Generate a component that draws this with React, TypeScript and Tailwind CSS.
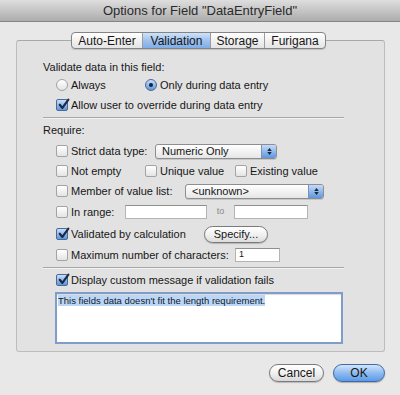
import type { ReactNode } from "react";

// Small aqua-style controls
function CheckBox({ checked }: { checked?: boolean }) {
  return (
    <span
      className={
        "relative inline-flex w-[12px] h-[12px] shrink-0 rounded-[2px] border " +
        (checked
          ? "border-[#4a6a96] bg-gradient-to-b from-[#c9defa] to-[#5d95dc]"
          : "border-[#a3a3a3] bg-gradient-to-b from-[#ffffff] to-[#e4e4e4]")
      }
    >
      {checked && (
        <svg viewBox="0 0 12 12" className="absolute left-[0px] top-[-2px] w-[13px] h-[13px]">
          <path d="M2.5 6.2 L5 9.2 L10.5 1.5" fill="none" stroke="#1b2a44" strokeWidth="2" strokeLinecap="round" strokeLinejoin="round" />
        </svg>
      )}
    </span>
  );
}

function Radio({ checked }: { checked?: boolean }) {
  return (
    <span
      className={
        "inline-flex items-center justify-center w-[12px] h-[12px] shrink-0 rounded-full border " +
        (checked
          ? "border-[#4a6a96] bg-gradient-to-b from-[#c9defa] to-[#5d95dc]"
          : "border-[#a3a3a3] bg-gradient-to-b from-[#ffffff] to-[#e4e4e4]")
      }
    >
      {checked && <span className="w-[4px] h-[4px] rounded-full bg-[#152238]" />}
    </span>
  );
}

function Check({ label, checked, w }: { label: string; checked?: boolean; w?: string }) {
  return (
    <span className={"flex items-center gap-[3px] shrink-0 " + (w ?? "")}>
      <CheckBox checked={checked} />
      <span>{label}</span>
    </span>
  );
}

function Popup({ value, w }: { value: string; w: string }) {
  return (
    <span className={"flex h-[15px] rounded-[3px] border border-[#8e8e8e] overflow-hidden bg-gradient-to-b from-[#ffffff] to-[#e6e6e6] shadow-[0_1px_0_rgba(0,0,0,0.12)] " + w}>
      <span className="flex-1 pl-[6px] leading-[13px]">{value}</span>
      <span className="w-[15px] border-l border-[#7d93b6] bg-gradient-to-b from-[#c5dbf7] to-[#5e95dc] flex flex-col items-center justify-center gap-[1px]">
        <svg viewBox="0 0 6 4" className="w-[5px] h-[3px]"><path d="M0 4 L3 0 L6 4 Z" fill="#1a2740" /></svg>
        <svg viewBox="0 0 6 4" className="w-[5px] h-[3px]"><path d="M0 0 L3 4 L6 0 Z" fill="#1a2740" /></svg>
      </span>
    </span>
  );
}

function Field({ w, h, children }: { w: string; h: string; children?: ReactNode }) {
  return (
    <span className={"flex items-center bg-white border border-[#b4b4b4] border-t-[#8f8f8f] pl-[3px] text-[9px] " + w + " " + h}>
      {children}
    </span>
  );
}

function Row({ children, mt, pl = "pl-[13px]" }: { children: ReactNode; mt: string; pl?: string }) {
  return <div className={"flex items-center h-[18px] " + mt + " " + pl}>{children}</div>;
}

function Sep({ mt }: { mt: string }) {
  return <div className={"w-[301px] h-[2px] border-t border-[#a7a7a7] border-b border-b-[#f2f2f2] " + mt} />;
}

const tabs = ["Auto-Enter", "Validation", "Storage", "Furigana"];
const tabW = ["w-[70px]", "w-[68px]", "w-[54px]", "w-[61px]"];

export default function App() {
  return (
    <div className="w-[400px] h-[395px] bg-[#e8e8e8] text-[11px] text-[#161616] font-['Liberation_Sans',Arial,sans-serif] flex flex-col overflow-hidden">
      {/* title bar */}
      <div className="h-[22px] shrink-0 flex items-center justify-center bg-gradient-to-b from-[#dedede] to-[#adadad] border-b border-[#858585] text-[13px] text-[#2a2a2a]">
        Options for Field "DataEntryField"
      </div>

      <div className="flex flex-col pl-[16px] pt-[10px]">
        {/* tabs */}
        <div className="relative z-10 flex w-[369px] justify-center pr-[4px]">
          <div className="flex h-[17px] rounded-[4px] border border-[#848484] overflow-hidden bg-gradient-to-b from-[#ffffff] to-[#e4e4e4] shadow-[0_1px_1px_rgba(0,0,0,0.15)] text-[12px]">
            {tabs.map((t, i) => (
              <span
                key={t}
                className={
                  "flex items-center justify-center " +
                  tabW[i] +
                  (i > 0 ? " border-l border-[#9c9c9c]" : "") +
                  (t === "Validation" ? " bg-gradient-to-b from-[#cfe2f9] via-[#9fc2ee] to-[#7eaee8]" : "")
                }
              >
                {t}
              </span>
            ))}
          </div>
        </div>

        {/* group box */}
        <div className="-mt-[9px] w-[369px] h-[312px] rounded-[3px] border border-[#bdbdbd] border-t-[#a9a9a9] bg-[#e2e2e2] pl-[26px] pt-[17px] flex flex-col">
          <Row mt="mt-0" pl="pl-0">Validate data in this field:</Row>
          <Row mt="mt-0">
            <span className="flex items-center gap-[3px] w-[89px]"><Radio /><span>Always</span></span>
            <span className="flex items-center gap-[3px]"><Radio checked /><span>Only during data entry</span></span>
          </Row>
          <Row mt="mt-[2px]">
            <Check checked label="Allow user to override during data entry" />
          </Row>
          <Sep mt="mt-[3px]" />
          <Row mt="mt-[2px]" pl="pl-0">Require:</Row>
          <Row mt="mt-[3px]">
            <Check label="Strict data type:" w="w-[99px]" />
            <Popup value="Numeric Only" w="w-[122px]" />
          </Row>
          <Row mt="mt-[2px]">
            <Check label="Not empty" w="w-[89px]" />
            <Check label="Unique value" w="w-[90px]" />
            <Check label="Existing value" />
          </Row>
          <Row mt="mt-[2px]">
            <Check label="Member of value list:" w="w-[129px]" />
            <Popup value="<unknown>" w="w-[139px]" />
          </Row>
          <Row mt="mt-[3px]">
            <Check label="In range:" w="w-[69px]" />
            <Field w="w-[82px]" h="h-[14px]" />
            <span className="w-[27px] text-center text-[9px] text-[#8a8a8a]">to</span>
            <Field w="w-[74px]" h="h-[14px]" />
          </Row>
          <Row mt="mt-[4px]">
            <Check checked label="Validated by calculation" w="w-[148px]" />
            <span className="flex items-center justify-center w-[64px] h-[17px] rounded-full border border-[#7a7a7a] bg-gradient-to-b from-[#ffffff] via-[#f1f1f1] to-[#dcdcdc] shadow-[0_1px_1px_rgba(0,0,0,0.2)] text-[11px]">
              Specify...
            </span>
          </Row>
          <Row mt="mt-[3px]">
            <Check label="Maximum number of characters:" w="w-[179px]" />
            <Field w="w-[45px]" h="h-[14px]">1</Field>
          </Row>
          <Sep mt="mt-[3px]" />
          <Row mt="mt-[2px]">
            <Check checked label="Display custom message if validation fails" />
          </Row>
          <div className="ml-[12px] mt-[3px] w-[288px] h-[52px] bg-white border-2 border-[#7f9ccb] shadow-[inset_0_1px_1px_rgba(0,0,0,0.15)] px-[1px] pt-[1px] text-[9.5px] leading-[12px] text-[#0d1a2e]">
            <span className="bg-[#bcd6f5]">This fields data doesn't fit the length requirement.</span>
          </div>
        </div>

        {/* buttons */}
        <div className="flex w-[369px] justify-end gap-[9px] mt-[12px]">
          <span className="flex items-center justify-center w-[55px] h-[18px] rounded-full border border-[#7a7a7a] bg-gradient-to-b from-[#ffffff] via-[#f1f1f1] to-[#d8d8d8] shadow-[0_1px_1px_rgba(0,0,0,0.2)] text-[12px]">
            Cancel
          </span>
          <span className="flex items-center justify-center w-[52px] h-[18px] rounded-full border border-[#3f6aa8] bg-gradient-to-b from-[#d3e5fb] via-[#8ebbf0] to-[#5b9ae6] shadow-[0_1px_1px_rgba(0,0,0,0.25)] text-[12px]">
            OK
          </span>
        </div>
      </div>
    </div>
  );
}
